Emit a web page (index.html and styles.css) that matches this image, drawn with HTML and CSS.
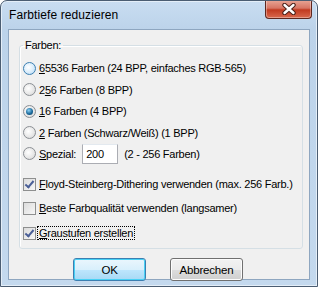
FILE: index.html
```html
<!DOCTYPE html>
<html lang="de">
<head>
  <meta charset="UTF-8">
  <title>Farbtiefe reduzieren</title>
  <link rel="stylesheet" href="styles.css">
</head>
<body>
  <div class="window">
    <div class="titlebar">
      <span class="title">Farbtiefe reduzieren</span>
      <div class="close">
        <svg width="16" height="12" viewBox="0 0 16 12">
          <path d="M3.5 2 L12.5 10 M12.5 2 L3.5 10" stroke="#4a2019" stroke-width="4.4" stroke-linecap="round"/>
          <path d="M3.5 2 L12.5 10 M12.5 2 L3.5 10" stroke="#fff" stroke-width="2.4" stroke-linecap="round"/>
        </svg>
      </div>
    </div>
    <div class="client">
      <fieldset class="group">
        <legend>Farben:</legend>
        <label class="option r1"><span class="radio hot"></span><span><u>6</u>5536 Farben (24 BPP, einfaches RGB-565)</span></label>
        <label class="option r2"><span class="radio"></span><span>2<u>5</u>6 Farben (8 BPP)</span></label>
        <label class="option r1"><span class="radio on"></span><span><u>1</u>6 Farben (4 BPP)</span></label>
        <label class="option r2"><span class="radio"></span><span><u>2</u> Farben (Schwarz/Weiß) (1 BPP)</span></label>
        <label class="option r2"><span class="radio"></span><span><u>S</u>pezial:</span><span class="edit">200</span><span>(2 - 256 Farben)</span></label>
        <label class="option check c1"><span class="box on"></span><span><u>F</u>loyd-Steinberg-Dithering verwenden (max. 256 Farb.)</span></label>
        <label class="option check c2"><span class="box"></span><span><u>B</u>este Farbqualität verwenden (langsamer)</span></label>
        <label class="option check c3"><span class="box on"></span><span class="focus"><u>G</u>raustufen erstellen</span></label>
      </fieldset>
      <div class="buttons">
        <button class="btn default">OK</button>
        <button class="btn">Abbrechen</button>
      </div>
    </div>
  </div>
</body>
</html>
```

FILE: styles.css
```css
html, body {
  margin: 0;
  padding: 0;
  background: #fff;
}
body {
  font-family: "Liberation Sans", Arial, sans-serif;
  font-size: 11px;
  letter-spacing: -0.25px;
  color: #000;
}
.window {
  width: 316px;
  height: 285px;
  border: 1px solid #4b5d72;
  border-radius: 7px 7px 0 0;
  background: linear-gradient(180deg, #c9ddf1 0%, #bcd3ea 28px, #c4d9ee 100%);
  box-shadow: inset 0 0 0 1px #e4eef8;
  display: flex;
  flex-direction: column;
  overflow: hidden;
}
.titlebar {
  height: 28px;
  display: flex;
  align-items: flex-start;
  justify-content: space-between;
  padding-left: 8px;
}
.title {
  margin-top: 7px;
  font-size: 12px;
  letter-spacing: 0.1px;
  color: #000;
}
.close {
  width: 45px;
  height: 18px;
  margin-right: 5px;
  margin-top: -1px;
  border: 1px solid #5e271e;
  border-top: none;
  border-radius: 0 0 4px 4px;
  background: linear-gradient(180deg, #e9a797 0%, #d77564 45%, #c13a20 55%, #d9694e 100%);
  box-shadow: inset 0 0 0 1px rgba(255,255,255,0.35);
  display: flex;
  align-items: center;
  justify-content: center;
}
.client {
  margin: 0 7px;
  height: 249px;
  border: 1px solid #8ea6c0;
  background: #f0f0f0;
  display: flex;
  flex-direction: column;
}
.group {
  margin: 9px 6px 0 10px;
  padding: 5px 0 6px 3px;
  min-width: 0;
  border: 1px solid #d5dfe5;
  border-radius: 3px;
  box-shadow: 1px 1px 0 #fff inset;
}
.group legend {
  padding: 0 2px;
  line-height: 13px;
}
.option {
  display: flex;
  align-items: center;
  gap: 3px;
  white-space: nowrap;
}
.r1 {
  height: 22px;
}
.r2 {
  height: 21px;
}
.radio {
  width: 11px;
  height: 11px;
  border: 1px solid #8b8f94;
  border-radius: 50%;
  background: radial-gradient(circle at 40% 40%, #fff 0%, #e6e6e6 60%, #cfcfcf 100%);
  flex: none;
  position: relative;
}
.radio.hot {
  border-color: #3c7fb1;
  background: radial-gradient(circle at 40% 40%, #fff 0%, #d8ecfb 55%, #a8d2f2 100%);
}
.radio.on::after {
  content: "";
  position: absolute;
  left: 2px;
  top: 2px;
  width: 7px;
  height: 7px;
  border-radius: 50%;
  background: radial-gradient(circle at 40% 35%, #8fd3f5 0%, #1c6a9c 55%, #0b3b5c 100%);
}
.edit {
  box-sizing: border-box;
  width: 36px;
  height: 20px;
  border: 1px solid #abadb3;
  border-top-color: #e3e9ef;
  background: #fff;
  padding-left: 3px;
  line-height: 18px;
  margin: 0 3px;
}
.check {
  height: 18px;
}
.c1 {
  margin-top: 11px;
}
.c2 {
  margin-top: 6px;
}
.c3 {
  margin-top: 7px;
}
.box {
  width: 11px;
  height: 11px;
  border: 1px solid #8e8f8f;
  background: linear-gradient(135deg, #dcdcdc 0%, #f6f6f6 100%);
  flex: none;
  position: relative;
}
.box.on::after {
  content: "";
  position: absolute;
  left: 3px;
  top: 0;
  width: 3px;
  height: 7px;
  border: solid #4a5f97;
  border-width: 0 2px 2px 0;
  transform: rotate(40deg);
}
.focus {
  outline: 1px dotted #000;
  padding: 0 1px;
  margin-left: -1px;
}
.buttons {
  display: flex;
  justify-content: center;
  gap: 24px;
  margin-top: 9px;
  padding-right: 2px;
}
.btn {
  width: 73px;
  height: 23px;
  font-family: "Liberation Sans", Arial, sans-serif;
  font-size: 11.5px;
  letter-spacing: -0.2px;
  color: #000;
  border: 1px solid #707070;
  border-radius: 3px;
  background: linear-gradient(180deg, #f2f2f2 0%, #ebebeb 50%, #dddddd 51%, #cfcfcf 100%);
  box-shadow: inset 0 0 0 1px #fcfcfc;
  padding: 0;
}
.btn.default {
  border-color: #3c7fb1;
  background: linear-gradient(180deg, #eaf6fd 0%, #d9f0fc 50%, #bee6fd 51%, #a7d9f5 100%);
  box-shadow: inset 0 0 0 1px #48d1f5;
}
```
